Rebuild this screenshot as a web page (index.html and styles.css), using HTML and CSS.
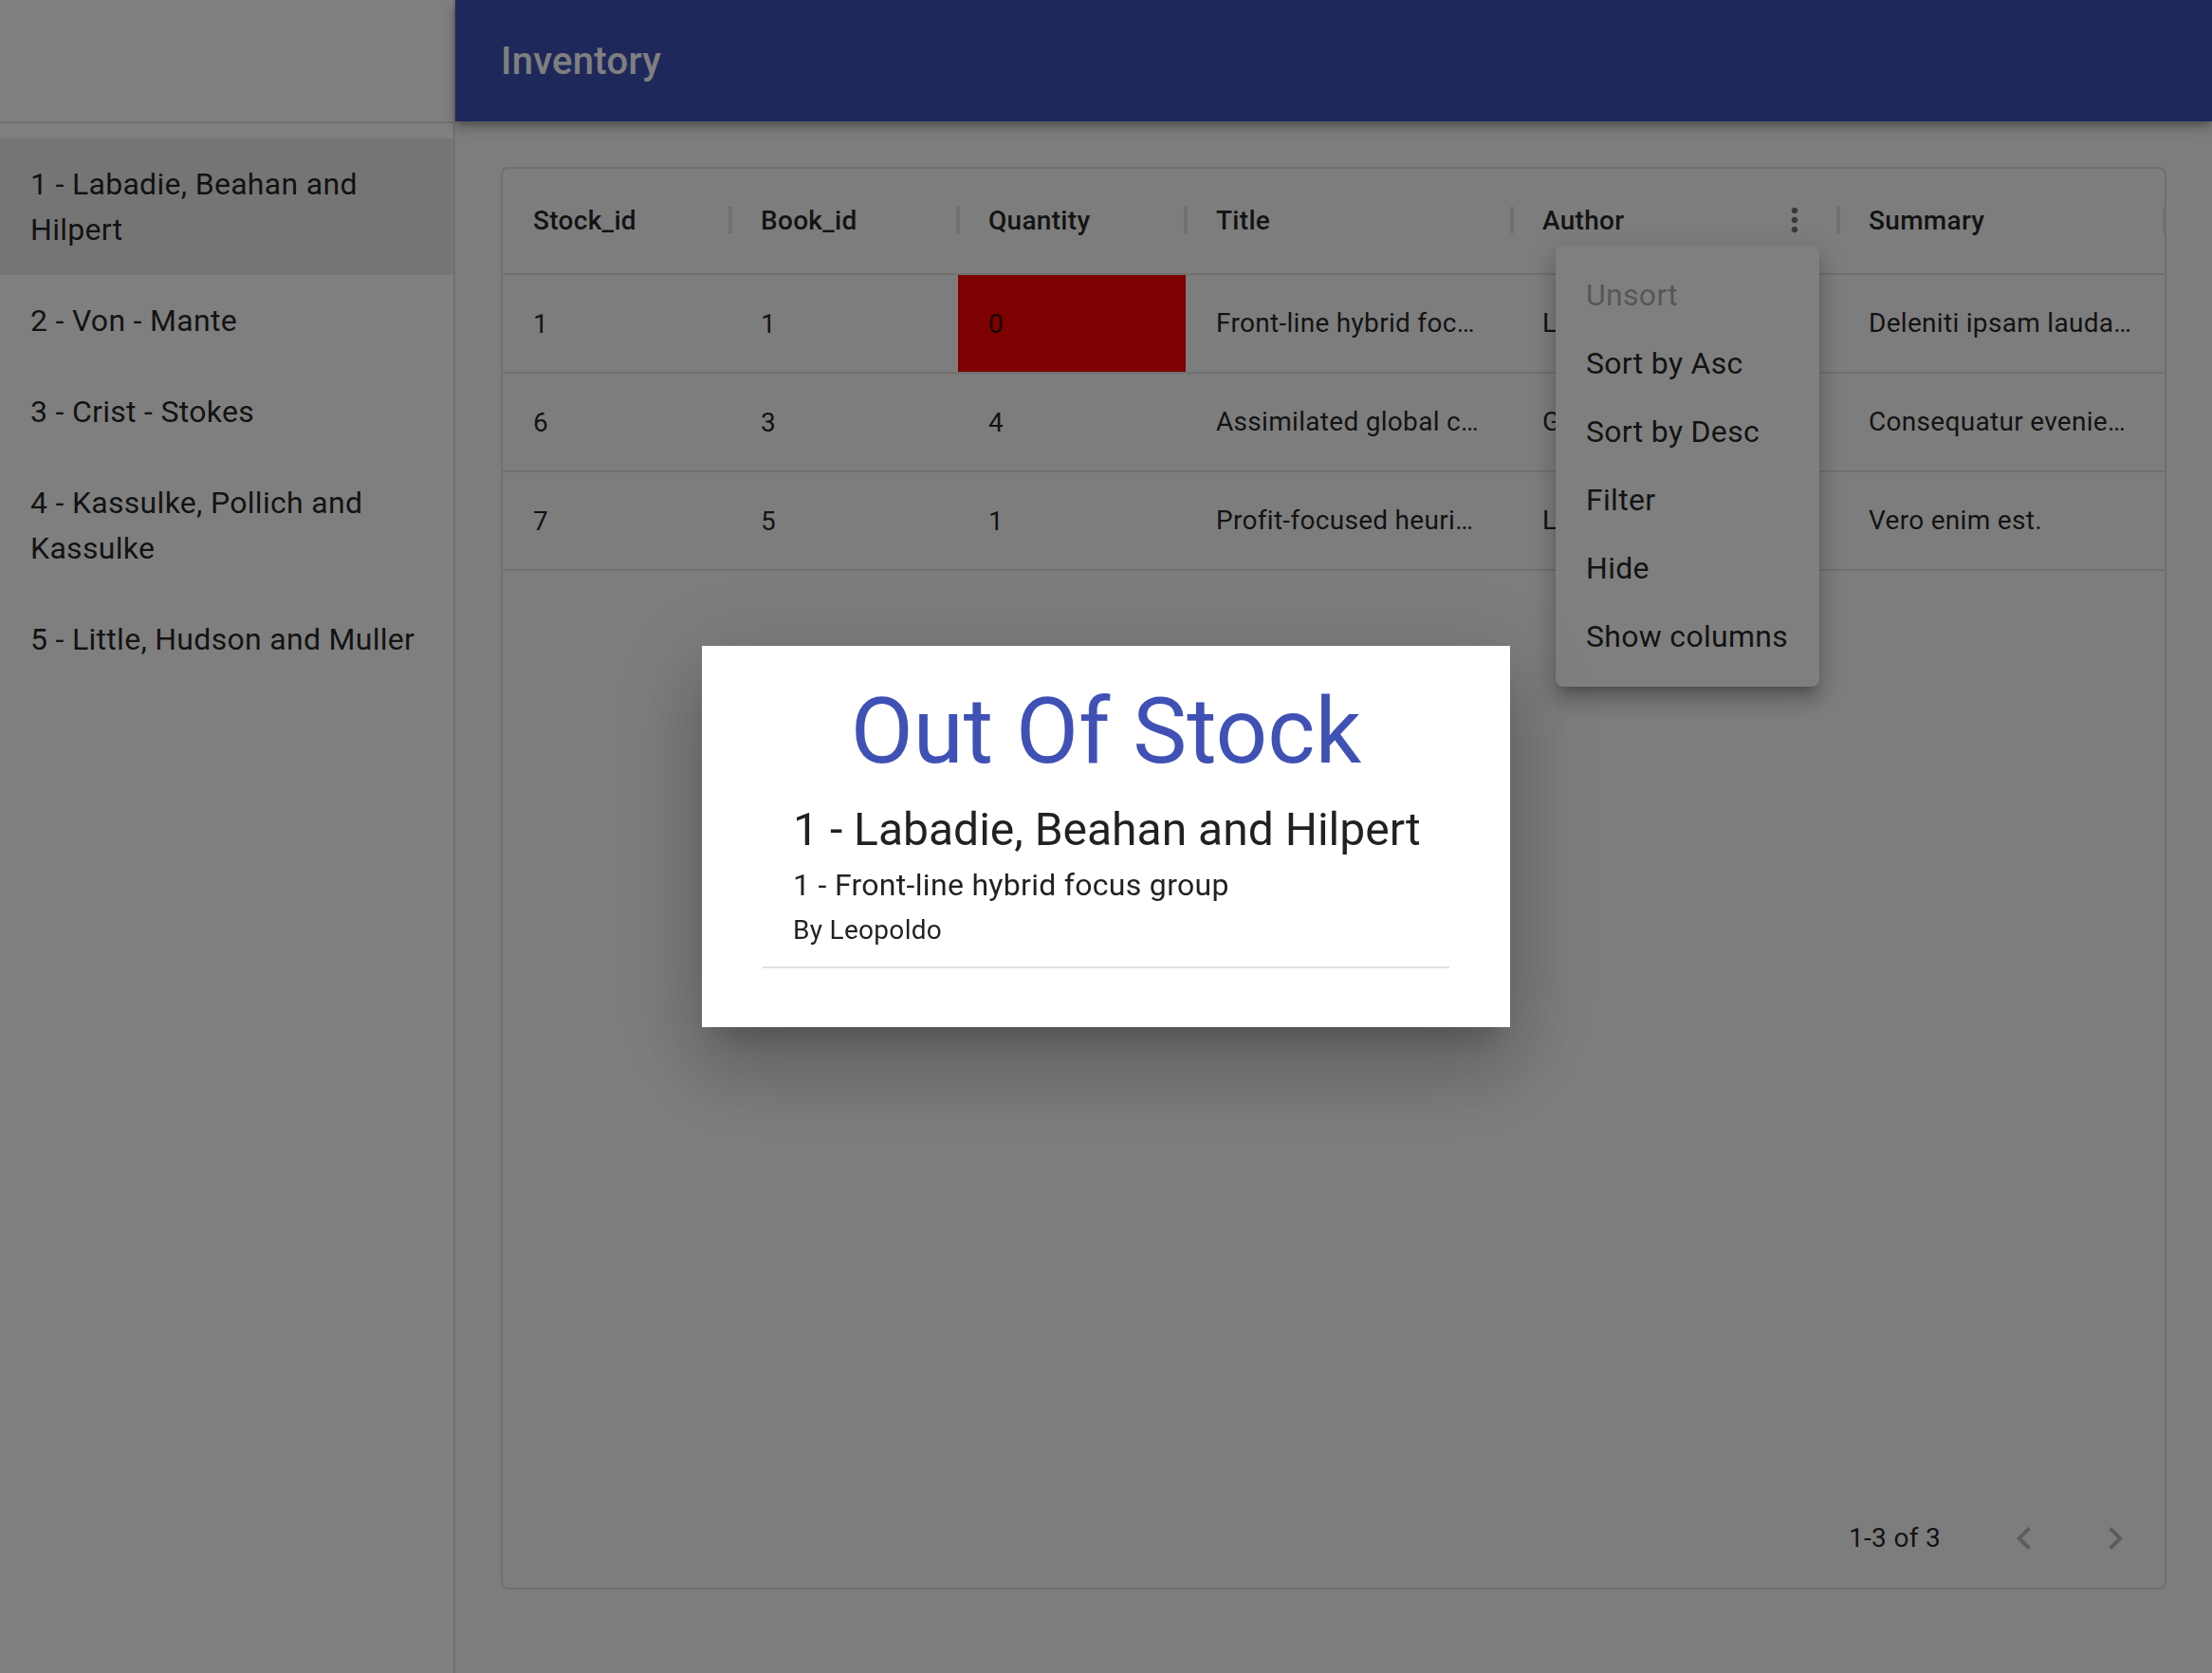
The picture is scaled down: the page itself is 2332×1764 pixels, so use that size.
FILE: index.html
```html
<!DOCTYPE html>
<html lang="en">
<head>
<meta charset="utf-8">
<title>Inventory</title>
<link rel="stylesheet" href="styles.css">
</head>
<body>
<div class="app">
  <aside class="drawer">
    <div class="drawer-toolbar"></div>
    <div class="divider"></div>
    <ul class="store-list">
      <li class="store-item selected">1 - Labadie, Beahan and Hilpert</li>
      <li class="store-item">2 - Von - Mante</li>
      <li class="store-item">3 - Crist - Stokes</li>
      <li class="store-item">4 - Kassulke, Pollich and Kassulke</li>
      <li class="store-item">5 - Little, Hudson and Muller</li>
    </ul>
  </aside>
  <div class="main">
    <header class="appbar">
      <h1 class="appbar-title">Inventory</h1>
    </header>
    <section class="content">
      <div class="grid">
        <div class="grid-header">
          <div class="hcell w-s">Stock_id</div>
          <div class="hcell w-s">Book_id</div>
          <div class="hcell w-s">Quantity</div>
          <div class="hcell w-l">Title</div>
          <div class="hcell w-l menu-open">
            <span class="htitle">Author</span>
            <span class="hmenu-btn">
              <svg viewBox="0 0 24 24" width="40" height="40"><path d="M12 8c1.1 0 2-.9 2-2s-.9-2-2-2-2 .9-2 2 .9 2 2 2zm0 2c-1.1 0-2 .9-2 2s.9 2 2 2 2-.9 2-2-.9-2-2-2zm0 6c-1.1 0-2 .9-2 2s.9 2 2 2 2-.9 2-2-.9-2-2-2z"/></svg>
            </span>
          </div>
          <div class="hcell w-l">Summary</div>
        </div>
        <div class="grid-row">
          <div class="cell w-s">1</div>
          <div class="cell w-s">1</div>
          <div class="cell w-s out">0</div>
          <div class="cell w-l">Front-line hybrid focus group</div>
          <div class="cell w-l">Leopoldo</div>
          <div class="cell w-l">Deleniti ipsam laudantium quia.</div>
        </div>
        <div class="grid-row">
          <div class="cell w-s">6</div>
          <div class="cell w-s">3</div>
          <div class="cell w-s">4</div>
          <div class="cell w-l">Assimilated global contingency</div>
          <div class="cell w-l">Gregoria</div>
          <div class="cell w-l">Consequatur eveniet dolorem.</div>
        </div>
        <div class="grid-row">
          <div class="cell w-s">7</div>
          <div class="cell w-s">5</div>
          <div class="cell w-s">1</div>
          <div class="cell w-l">Profit-focused heuristic archive</div>
          <div class="cell w-l">Lorenza</div>
          <div class="cell w-l">Vero enim est.</div>
        </div>
        <div class="grid-footer">
          <span class="page-info">1-3 of 3</span>
          <div class="page-actions">
            <span class="page-btn">
              <svg viewBox="0 0 24 24" width="48" height="48"><path d="M15.41 16.59L10.83 12l4.58-4.59L14 6l-6 6 6 6 1.41-1.41z"/></svg>
            </span>
            <span class="page-btn">
              <svg viewBox="0 0 24 24" width="48" height="48"><path d="M8.59 16.59L13.17 12 8.59 7.41 10 6l6 6-6 6-1.41-1.41z"/></svg>
            </span>
          </div>
        </div>
      </div>
    </section>
  </div>
</div>

<ul class="column-menu">
  <li class="menu-item disabled">Unsort</li>
  <li class="menu-item">Sort by Asc</li>
  <li class="menu-item">Sort by Desc</li>
  <li class="menu-item">Filter</li>
  <li class="menu-item">Hide</li>
  <li class="menu-item">Show columns</li>
</ul>

<div class="backdrop">
  <div class="modal">
    <h2 class="modal-title">Out Of Stock</h2>
    <div class="modal-store">1 - Labadie, Beahan and Hilpert</div>
    <div class="modal-book">1 - Front-line hybrid focus group</div>
    <div class="modal-author">By Leopoldo</div>
    <div class="modal-divider"></div>
  </div>
</div>
</body>
</html>
```
FILE: styles.css
```css
* { box-sizing: border-box; }

html, body {
  margin: 0;
  padding: 0;
  height: 100%;
}

body {
  font-family: Roboto, "Liberation Sans", Arial, sans-serif;
  color: rgba(0, 0, 0, 0.87);
  background: #fafafa;
  overflow: hidden;
}

.app {
  display: flex;
  height: 100vh;
}

/* Drawer */
.drawer {
  width: 480px;
  flex: 0 0 480px;
  background: #ffffff;
  border-right: 2px solid rgba(0, 0, 0, 0.12);
  height: 100%;
}

.drawer-toolbar {
  height: 128px;
}

.divider {
  height: 2px;
  background: rgba(0, 0, 0, 0.12);
}

.store-list {
  list-style: none;
  margin: 0;
  padding: 16px 0 0;
}

.store-item {
  padding: 24px 32px;
  font-size: 32px;
  line-height: 48px;
  letter-spacing: 0.00938em;
  font-weight: 400;
}

.store-item.selected {
  background: rgba(0, 0, 0, 0.08);
}

/* Main */
.main {
  flex: 1;
  display: flex;
  flex-direction: column;
  min-width: 0;
  background: #fafafa;
}

.appbar {
  height: 128px;
  flex: 0 0 128px;
  background: #3f51b5;
  color: #ffffff;
  display: flex;
  align-items: center;
  padding: 0 48px;
  position: relative;
  z-index: 1;
  box-shadow: 0 4px 8px -2px rgba(0, 0, 0, 0.2), 0 8px 10px 0 rgba(0, 0, 0, 0.14), 0 2px 20px 0 rgba(0, 0, 0, 0.12);
}

.appbar-title {
  margin: 2px 0 0;
  font-size: 40px;
  font-weight: 500;
  line-height: 64px;
  letter-spacing: 0.0075em;
}

.content {
  padding: 48px;
}

/* Data grid */
.grid {
  height: 1500px;
  border: 2px solid #e0e0e0;
  border-radius: 8px;
  display: flex;
  flex-direction: column;
}

.grid-header {
  display: flex;
  height: 112px;
  border-bottom: 2px solid #e0e0e0;
}

.hcell {
  position: relative;
  display: flex;
  align-items: center;
  padding: 0 32px 2px;
  font-size: 28px;
  font-weight: 500;
  letter-spacing: 0.01071em;
  white-space: nowrap;
}

.hcell::after {
  content: "";
  position: absolute;
  right: -2px;
  top: 50%;
  width: 4px;
  height: 28px;
  margin-top: -15px;
  background: #e0e0e0;
  z-index: 1;
}

.w-s { width: 240px; flex: 0 0 240px; }
.w-l { width: 344px; flex: 0 0 344px; }

.hcell.menu-open {
  padding-right: 16px;
}

.htitle {
  flex: 1;
}

.hmenu-btn {
  width: 60px;
  height: 60px;
  display: flex;
  align-items: center;
  justify-content: center;
  fill: rgba(0, 0, 0, 0.54);
}

.grid-row {
  display: flex;
  height: 104px;
  border-bottom: 2px solid #e0e0e0;
}

.cell {
  display: flex;
  align-items: center;
  padding: 0 32px;
  font-size: 28px;
  letter-spacing: 0.01071em;
  white-space: nowrap;
  overflow: hidden;
  min-width: 0;
}

.cell.w-l {
  display: block;
  line-height: 102px;
  text-overflow: ellipsis;
}

.cell.out {
  background: #ff0000;
}

.grid-footer {
  margin-top: auto;
  height: 104px;
  display: flex;
  align-items: center;
  justify-content: flex-end;
  padding-right: 4px;
}

.page-info {
  font-size: 28px;
  letter-spacing: 0.01071em;
  line-height: 40px;
}

.page-actions {
  display: flex;
  margin-left: 40px;
}

.page-btn {
  width: 96px;
  height: 96px;
  display: flex;
  align-items: center;
  justify-content: center;
  fill: rgba(0, 0, 0, 0.26);
}

/* Column menu (popover) */
.column-menu {
  position: absolute;
  left: 1640px;
  top: 259px;
  width: 278px;
  margin: 0;
  padding: 16px 0 17px;
  list-style: none;
  background: #ffffff;
  border-radius: 8px;
  box-shadow: 0 10px 10px -6px rgba(0, 0, 0, 0.2), 0 16px 20px 2px rgba(0, 0, 0, 0.14), 0 6px 28px 4px rgba(0, 0, 0, 0.12);
}

.menu-item {
  height: 72px;
  display: flex;
  align-items: center;
  padding: 0 32px;
  font-size: 32px;
  line-height: 48px;
  letter-spacing: 0.00938em;
  white-space: nowrap;
}

.menu-item.disabled {
  opacity: 0.38;
}

/* Modal */
.backdrop {
  position: fixed;
  inset: 0;
  background: rgba(0, 0, 0, 0.5);
  display: flex;
  align-items: center;
  justify-content: center;
  z-index: 10;
}

.modal {
  width: 852px;
  background: #ffffff;
  padding: 34px 64px 62px;
  box-shadow: 0 22px 30px -14px rgba(0, 0, 0, 0.2), 0 48px 76px 6px rgba(0, 0, 0, 0.14), 0 18px 92px 16px rgba(0, 0, 0, 0.12);
}

.modal-title {
  margin: 0;
  font-size: 96px;
  font-weight: 400;
  line-height: 112px;
  color: #3f51b5;
  text-align: center;
  letter-spacing: 0;
}

.modal-store {
  margin-top: 16px;
  padding-left: 32px;
  font-size: 48px;
  line-height: 64px;
  white-space: nowrap;
}

.modal-book {
  margin-top: 2px;
  padding-left: 32px;
  font-size: 32px;
  line-height: 48px;
  letter-spacing: 0.00938em;
}

.modal-author {
  margin-top: 4px;
  padding-left: 32px;
  font-size: 28px;
  line-height: 40px;
  letter-spacing: 0.01071em;
}

.modal-divider {
  margin-top: 18px;
  height: 2px;
  background: #e0e0e0;
}
```
